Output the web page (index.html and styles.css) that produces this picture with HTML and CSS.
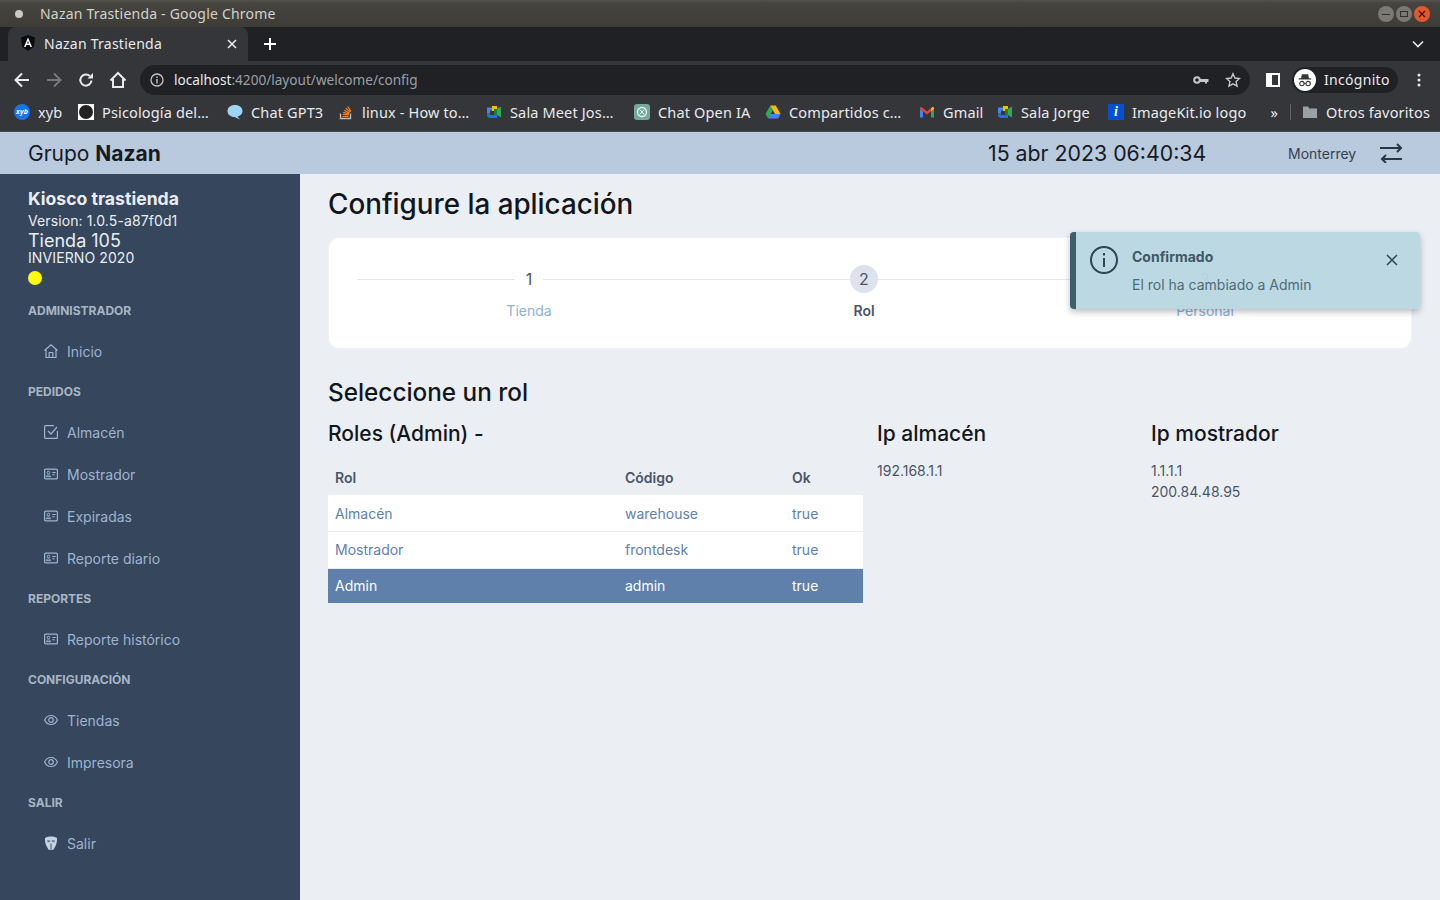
FILE: index.html
```html
<!DOCTYPE html>
<html lang="en">
<head>
  <meta charset="UTF-8" />
  <title>Nazan Trastienda</title>
  <link rel="stylesheet" href="styles.css">
</head>
<body>
  <svg class="defs" width="0" height="0">
    <symbol id="i-card" viewBox="0 0 14 14">
      <rect x="0.6" y="2.1" width="12.8" height="9.800" rx="1" fill="none" stroke="currentColor" stroke-width="1.200"/>
      <circle cx="4.400" cy="5.500" r="1.300" fill="none" stroke="currentColor"/>
      <path d="M2.200 9.700c.3-1.300 1.200-1.800 2.200-1.800s1.900.5 2.200 1.800z" fill="none" stroke="currentColor"/>
      <path d="M8.300 5.500h3.400M8.300 7.800h2.400" stroke="currentColor"/>
    </symbol>
    <symbol id="i-eye" viewBox="0 0 14 14">
      <path d="M.6 7C2 3.900 4.300 2.500 7 2.500S12 3.900 13.400 7C12 10.100 9.700 11.500 7 11.500S2 10.100 .6 7z" fill="none" stroke="currentColor" stroke-width="1.200"/>
      <circle cx="7" cy="7" r="2.300" fill="none" stroke="currentColor" stroke-width="1.200"/>
    </symbol>
  </svg>

  <div class="titlebar">
    <span class="app-dot"></span>
    <span class="window-title">Nazan Trastienda - Google Chrome</span>
    <div class="window-btns">
      <span class="wbtn"><svg width="8" height="8" viewBox="0 0 8 8"><path d="M0 4.500h8" stroke="#2f2f2b"/></svg></span>
      <span class="wbtn"><svg width="8" height="8" viewBox="0 0 8 8"><rect x=".5" y="1.500" width="7" height="5" fill="none" stroke="#2f2f2b"/></svg></span>
      <span class="wbtn close"><svg width="8" height="8" viewBox="0 0 8 8"><path d="M1 1l6 6M7 1l-6 6" stroke="#3a1508" stroke-width="1.200"/></svg></span>
    </div>
  </div>

  <div class="tabstrip">
    <div class="tab">
      <svg class="tab-icon" width="16" height="16" viewBox="0 0 16 16"><path d="M8 0l7 2.500-1.100 9.300L8 16l-5.900-4.200L1 2.500z" fill="#0b0b0d"/><path d="M8 2.500L4 12h1.600l.8-2h3.200l.8 2H12zM7 8.600l1-2.500 1 2.500z" fill="#fff"/></svg>
      <span class="tab-title">Nazan Trastienda</span>
      <svg class="tab-close" width="10" height="10" viewBox="0 0 10 10"><path d="M1 1l8 8M9 1l-8 8" stroke="#e8eaed" stroke-width="1.600"/></svg>
    </div>
    <svg class="new-tab" width="12" height="12" viewBox="0 0 12 12"><path d="M6 0v12M0 6h12" stroke="#fff" stroke-width="2"/></svg>
    <svg class="tab-list" width="12" height="8" viewBox="0 0 12 8"><path d="M1 1.500l5 5 5-5" fill="none" stroke="#e8eaed" stroke-width="1.600"/></svg>
  </div>

  <div class="toolbar">
    <div class="nav-btns">
      <svg width="16" height="16" viewBox="0 0 16 16"><path d="M15 8H2M8 1.500L1.500 8 8 14.500" fill="none" stroke="#e8eaed" stroke-width="2"/></svg>
      <svg width="16" height="16" viewBox="0 0 16 16"><path d="M1 8h13M8 1.500L14.500 8 8 14.500" fill="none" stroke="#77787b" stroke-width="2"/></svg>
      <svg width="16" height="16" viewBox="0 0 16 16"><path d="M13.500 8.500A5.600 5.600 0 1 1 11.800 4" fill="none" stroke="#e8eaed" stroke-width="2"/><path d="M9.500 6.500H15V1z" fill="#e8eaed"/></svg>
      <svg class="home-btn" width="18" height="18" viewBox="0 0 18 18"><path d="M1.500 9.500L9 2l7.500 7.500M4 8v8h10V8" fill="none" stroke="#e8eaed" stroke-width="2"/></svg>
    </div>
    <div class="omnibox">
      <svg class="info" width="14" height="14" viewBox="0 0 14 14"><circle cx="7" cy="7" r="6" fill="none" stroke="#c4c7c5" stroke-width="1.300"/><path d="M7 6v4.500M7 3.500v1.400" stroke="#c4c7c5" stroke-width="1.400"/></svg>
      <span class="url"><span class="host">localhost</span>:4200/layout/welcome/config</span>
      <svg class="key" width="16" height="10" viewBox="0 0 16 10"><circle cx="4" cy="5" r="2.800" fill="none" stroke="#c4c7c5" stroke-width="2"/><path d="M7 4h8.500v3h-1.500v1.500h-2V7H7z" fill="#c4c7c5"/></svg>
      <svg class="star" width="16" height="16" viewBox="0 0 16 16"><path d="M8 1.800l1.900 4.200 4.600.5-3.400 3.100.9 4.500L8 11.800l-4 2.300.9-4.500L1.500 6.500l4.600-.5z" fill="none" stroke="#c4c7c5" stroke-width="1.400"/></svg>
    </div>
    <svg class="panel-btn" width="14" height="14" viewBox="0 0 14 14"><rect x="1" y="1" width="12" height="12" fill="none" stroke="#fff" stroke-width="2"/><rect x="1" y="1" width="5" height="12" fill="#fff"/></svg>
    <div class="profile">
      <span class="avatar">
        <svg width="18" height="14" viewBox="0 0 18 14"><path d="M5.500 0h7l1 4.500H16V6H2V4.500h2.500z" fill="#35363a"/><circle cx="5.500" cy="10.500" r="2.500" fill="none" stroke="#35363a" stroke-width="1.200"/><circle cx="12.500" cy="10.500" r="2.500" fill="none" stroke="#35363a" stroke-width="1.200"/><path d="M8 10.300h2" stroke="#35363a" stroke-width="1.200"/></svg>
      </span>
      <span class="profile-name">Incógnito</span>
    </div>
    <svg class="menu-btn" width="4" height="14" viewBox="0 0 4 14"><circle cx="2" cy="2" r="1.500" fill="#e8eaed"/><circle cx="2" cy="7" r="1.500" fill="#e8eaed"/><circle cx="2" cy="12" r="1.500" fill="#e8eaed"/></svg>
  </div>

  <div class="bookmarks">
    <div class="bm"><span class="ic-xyb">xyb</span><span>xyb</span></div>
    <div class="bm"><span class="ic-psi"></span><span>Psicología del…</span></div>
    <div class="bm"><svg width="16" height="16" viewBox="0 0 16 16"><path d="M8 1c4.400 0 7.500 2.600 7.500 6 0 2.700-2 4.800-5 5.500L13 15.500 7.500 13C3.500 13 .5 10.500.5 7S3.600 1 8 1z" fill="#9fd4f5"/></svg><span>Chat GPT3</span></div>
    <div class="bm"><svg width="16" height="16" viewBox="0 0 16 16"><path d="M2.500 9.500v5h10v-5" fill="none" stroke="#bcbbbb" stroke-width="1.400"/><path d="M4.500 12.500h6M4.700 10.300l6 .6M5.200 8.300l5.800 1.500M6.200 6.200l5.300 2.800M7.800 4.200l4.500 3.900M9.700 2.500l3.200 4.800" stroke="#f48024" stroke-width="1.200"/></svg><span>linux - How to…</span></div>
    <div class="bm"><svg width="16" height="16" viewBox="0 0 16 16"><path d="M1 3.500h5v3H4v3H1z" fill="#4285f4"/><path d="M6 2h5v4H8v1H6z" fill="#fbbc04"/><path d="M1 9.500h3V11h7v3H3l-2-2z" fill="#1a73e8"/><path d="M11 5l4-2.500v11L11 11z" fill="#34a853"/><path d="M8 5h3v6H8z" fill="#188038"/></svg><span>Sala Meet Jos…</span></div>
    <div class="bm"><svg width="16" height="16" viewBox="0 0 16 16"><rect width="16" height="16" rx="3" fill="#74aa9c"/><circle cx="8" cy="8" r="4.500" fill="none" stroke="#e6f0ed" stroke-width="1.300"/><path d="M5.500 5.500l5 5M10.500 5.500l-5 5" stroke="#e6f0ed"/></svg><span>Chat Open IA</span></div>
    <div class="bm"><svg width="16" height="16" viewBox="0 0 16 16"><path d="M5.300 1.500L.5 10l2.700 4.500L8 6z" fill="#34a853"/><path d="M10.700 1.500H5.300L10 10h5.500z" fill="#fbbc04"/><path d="M3.200 14.500h10L15.500 10H5.500z" fill="#4285f4"/></svg><span>Compartidos c…</span></div>
    <div class="bm"><svg width="16" height="16" viewBox="0 0 16 16"><path d="M1 5l7 5.500L15 5V3.500l-1.500-.5L8 7.500 2.500 3 1 3.500z" fill="#ea4335"/><path d="M1 13.500h3V7.500L1 5z" fill="#4285f4"/><path d="M12 13.500h3V5l-3 2.500z" fill="#34a853"/><path d="M12 7.500L15 5V3.500L13.500 3 12 4.200z" fill="#fbbc04"/></svg><span>Gmail</span></div>
    <div class="bm"><svg width="16" height="16" viewBox="0 0 16 16"><path d="M1 3.500h5v3H4v3H1z" fill="#4285f4"/><path d="M6 2h5v4H8v1H6z" fill="#fbbc04"/><path d="M1 9.500h3V11h7v3H3l-2-2z" fill="#1a73e8"/><path d="M11 5l4-2.500v11L11 11z" fill="#34a853"/><path d="M8 5h3v6H8z" fill="#188038"/></svg><span>Sala Jorge</span></div>
    <div class="bm"><span class="ic-kit">i</span><span>ImageKit.io logo</span></div>
    <div class="bm-end">
      <span class="more">»</span>
      <span class="bm-sep"></span>
      <div class="bm"><svg width="16" height="14" viewBox="0 0 16 14"><path d="M1 1.500h5l1.500 2H15v9.500H1z" fill="#9aa0a6"/></svg><span>Otros favoritos</span></div>
    </div>
  </div>

  <header class="app-header">
    <div class="brand">Grupo <b>Nazan</b></div>
    <div class="clock">15 abr 2023 06:40:34</div>
    <div class="city">Monterrey</div>
    <svg class="swap" width="22" height="20" viewBox="0 0 22 20"><path d="M0 5h21M17 1l4 4-4 4M22 16H2M6 12l-4 4 4 4" fill="none" stroke="#2c3744" stroke-width="2"/></svg>
  </header>

  <div class="layout">
    <aside class="sidebar">
      <div class="kiosk">
        <div class="kiosk-name">Kiosco trastienda</div>
        <div class="kiosk-small">Version: 1.0.5-a87f0d1</div>
        <div class="kiosk-store">Tienda 105</div>
        <div class="kiosk-small">INVIERNO 2020</div>
        <div class="status-dot"></div>
      </div>

      <div class="nav-label">ADMINISTRADOR</div>
      <a class="nav-item">
        <svg width="14" height="14" viewBox="0 0 14 14"><path d="M.5 6.500L7 .8l6.500 5.700M2 5.500v8h10v-8M5.200 13.500V8.500h3.600v5" fill="none" stroke="currentColor" stroke-width="1.200"/></svg>
        Inicio
      </a>

      <div class="nav-label">PEDIDOS</div>
      <a class="nav-item">
        <svg width="14" height="14" viewBox="0 0 14 14"><path d="M13.400 6v6.400a1 1 0 0 1-1 1H1.600a1 1 0 0 1-1-1V1.600a1 1 0 0 1 1-1H10" fill="none" stroke="currentColor" stroke-width="1.200"/><path d="M4 6l3 3 6-7" fill="none" stroke="currentColor" stroke-width="1.200"/></svg>
        Almacén
      </a>
      <a class="nav-item"><svg width="14" height="14"><use href="#i-card"/></svg>Mostrador</a>
      <a class="nav-item"><svg width="14" height="14"><use href="#i-card"/></svg>Expiradas</a>
      <a class="nav-item"><svg width="14" height="14"><use href="#i-card"/></svg>Reporte diario</a>

      <div class="nav-label">REPORTES</div>
      <a class="nav-item"><svg width="14" height="14"><use href="#i-card"/></svg>Reporte histórico</a>

      <div class="nav-label">CONFIGURACIÓN</div>
      <a class="nav-item"><svg width="14" height="14"><use href="#i-eye"/></svg>Tiendas</a>
      <a class="nav-item"><svg width="14" height="14"><use href="#i-eye"/></svg>Impresora</a>

      <div class="nav-label">SALIR</div>
      <a class="nav-item">
        <svg width="14" height="14" viewBox="0 0 14 14"><path d="M1 2C3 .8 5 .4 7 .4s4 .4 6 1.600c.1 3.500-.4 6-1.500 8L9.500 13.800h-5L2.500 10C1.400 8 .9 5.500 1 2z" fill="#c9d2dd"/><path d="M3 4.200h3.200v1.600l-2.400.8zM11 4.200H7.800v1.600l2.400.8zM6.300 7.500h1.400v5.500H6.300z" fill="#5f7d9f"/></svg>
        Salir
      </a>
    </aside>

    <main class="content">
      <h1 class="page-title">Configure la aplicación</h1>

      <section class="steps-card">
        <div class="step">
          <div class="step-head"><span class="step-line"></span><span class="step-num">1</span><span class="step-line"></span></div>
          <div class="step-label">Tienda</div>
        </div>
        <div class="step active">
          <div class="step-head"><span class="step-line"></span><span class="step-num">2</span><span class="step-line"></span></div>
          <div class="step-label">Rol</div>
        </div>
        <div class="step">
          <div class="step-head"><span class="step-line"></span><span class="step-num">3</span><span class="step-line"></span></div>
          <div class="step-label">Personal</div>
        </div>
      </section>

      <h2 class="section-title">Seleccione un rol</h2>

      <div class="role-grid">
        <div>
          <h3 class="col-title">Roles (Admin) -</h3>
          <table class="roles">
            <thead>
              <tr><th>Rol</th><th>Código</th><th>Ok</th></tr>
            </thead>
            <tbody>
              <tr><td>Almacén</td><td>warehouse</td><td>true</td></tr>
              <tr><td>Mostrador</td><td>frontdesk</td><td>true</td></tr>
              <tr class="selected"><td>Admin</td><td>admin</td><td>true</td></tr>
            </tbody>
          </table>
        </div>
        <div>
          <h3 class="col-title">Ip almacén</h3>
          <p class="ip-list">192.168.1.1</p>
        </div>
        <div>
          <h3 class="col-title">Ip mostrador</h3>
          <p class="ip-list">1.1.1.1<br>200.84.48.95</p>
        </div>
      </div>

      <div class="toast">
        <svg class="toast-icon" width="28" height="28" viewBox="0 0 28 28"><circle cx="14" cy="14" r="13" fill="none" stroke="#2f4650" stroke-width="2"/><path d="M14 12v9M14 7v2.500" stroke="#2f4650" stroke-width="2"/></svg>
        <div class="toast-body">
          <div class="toast-title">Confirmado</div>
          <div class="toast-msg">El rol ha cambiado a Admin</div>
        </div>
        <svg class="toast-close" width="12" height="12" viewBox="0 0 12 12"><path d="M1 1l10 10M11 1L1 11" stroke="#2f4650" stroke-width="1.500"/></svg>
      </div>
    </main>
  </div>
</body>
</html>
```

FILE: styles.css
```css
* {
  box-sizing: border-box;
}
html, body {
  height: 100%;
}
body {
  margin: 0;
  height: 900px;
  overflow: hidden;
  font-family: Inter, "Liberation Sans", sans-serif;
  background: #ebeff4;
  display: flex;
  flex-direction: column;
}
.defs {
  position: absolute;
}

/* browser chrome */
.titlebar {
  height: 27px;
  flex: none;
  display: flex;
  align-items: center;
  padding: 0 10px 0 14px;
  background: linear-gradient(#555450, #45443f 12%, #3d3c38);
  font-family: "Noto Sans", sans-serif;
  font-size: 14px;
  letter-spacing: 0.2px;
  color: #d3d2cb;
}
.app-dot {
  width: 8px;
  height: 8px;
  border-radius: 50%;
  background: #c9c9c4;
  margin: 1px 17px 0 1px;
}
.window-btns {
  margin-left: auto;
  display: flex;
  gap: 2px;
}
.wbtn {
  width: 16px;
  height: 16px;
  border-radius: 50%;
  background: #7a7974;
  display: flex;
  align-items: center;
  justify-content: center;
}
.wbtn.close {
  background: #e2572b;
}
.tabstrip {
  height: 34px;
  flex: none;
  display: flex;
  align-items: center;
  background: #202124;
  padding-left: 8px;
  font-family: "Noto Sans", sans-serif;
}
.tab {
  width: 240px;
  height: 34px;
  background: #35363a;
  border-radius: 8px 8px 0 0;
  display: flex;
  align-items: center;
  padding: 0 11px 2px 12px;
  font-size: 14px;
  letter-spacing: 0.25px;
  color: #e8eaed;
}
.tab-icon {
  margin-right: 8px;
}
.tab-close {
  margin-left: auto;
  margin-top: 2px;
}
.new-tab {
  margin-left: 16px;
}
.tab-list {
  margin-left: auto;
  margin-right: 16px;
}
.toolbar {
  height: 34px;
  flex: none;
  display: flex;
  align-items: center;
  background: #35363a;
  padding-top: 4px;
  font-family: "Noto Sans", sans-serif;
}
.nav-btns {
  width: 140px;
  display: flex;
  align-items: center;
  gap: 16px;
  padding-left: 14px;
}
.home-btn {
  margin-left: -1px;
}
.omnibox {
  width: 1110px;
  height: 30px;
  border-radius: 15px;
  background: #202124;
  display: flex;
  align-items: center;
  padding: 0 9px 0 10px;
  font-size: 13.6px;
  color: #9aa0a6;
}
.info {
  margin-right: 10px;
}
.url {
  margin-bottom: 2px;
}
.host {
  color: #e8eaed;
}
.key {
  margin-left: auto;
  margin-right: 16px;
}
.panel-btn {
  margin-left: 16px;
}
.profile {
  margin-left: 12px;
  height: 26px;
  width: 106px;
  border-radius: 13px;
  background: #202124;
  display: flex;
  align-items: center;
  font-size: 14px;
  letter-spacing: 0.3px;
  color: #e8eaed;
}
.avatar {
  width: 22px;
  height: 22px;
  margin-left: 2px;
  margin-right: 8px;
  border-radius: 50%;
  background: #fff;
  display: flex;
  align-items: center;
  justify-content: center;
}
.avatar svg {
  width: 16px;
  height: 13px;
}
.profile-name {
  margin-bottom: 2px;
}
.menu-btn {
  margin-left: 19px;
}
.bookmarks {
  height: 37px;
  flex: none;
  display: grid;
  grid-template-columns: 64px 149px 111px 148px 148px 131px 154px 78px 111px auto 1fr;
  align-items: center;
  padding: 0 10px 2px 14px;
  background: #35363a;
  border-bottom: 1px solid #4a4b4f;
  font-family: "Noto Sans", sans-serif;
  font-size: 14.5px;
  letter-spacing: 0.15px;
  color: #e8eaed;
}
.bm {
  display: flex;
  align-items: center;
  gap: 8px;
  white-space: nowrap;
}
.bm svg {
  flex: none;
}
.ic-xyb {
  width: 16px;
  height: 16px;
  border-radius: 50%;
  background: #1a73e8;
  color: #fff;
  font-size: 7px;
  font-style: italic;
  font-weight: 700;
  text-align: center;
  line-height: 16px;
}
.ic-psi {
  width: 16px;
  height: 16px;
  background: #fff;
  position: relative;
}
.ic-psi::after {
  content: "";
  position: absolute;
  inset: 1px;
  border-radius: 50%;
  background: #222;
}
.ic-kit {
  width: 16px;
  height: 16px;
  background: #0450d5;
  color: #fff;
  font-family: "Liberation Serif", serif;
  font-style: italic;
  font-weight: 700;
  font-size: 14px;
  line-height: 16px;
  text-align: center;
}
.bm-end {
  justify-self: end;
  display: flex;
  align-items: center;
}
.more {
  margin-right: 12px;
}
.bm-sep {
  width: 1px;
  height: 16px;
  background: #5f6368;
  margin-right: 11px;
}

/* app header */
.app-header {
  height: 42px;
  flex: none;
  display: flex;
  align-items: center;
  background: #b9c9de;
  padding-left: 28px;
  color: #161b22;
}
.brand {
  width: 960px;
  font-size: 21px;
}
.clock {
  width: 300px;
  font-size: 21.3px;
}
.city {
  width: 92px;
  font-size: 14px;
  color: #36414f;
}

.layout {
  flex: 1;
  display: flex;
  min-height: 0;
}

/* sidebar */
.sidebar {
  width: 300px;
  flex: none;
  background: #35465d;
  color: #e9edf2;
}
.kiosk {
  padding: 14px 0 6px 28px;
}
.kiosk-name {
  font-size: 17.6px;
  font-weight: 700;
  line-height: 22px;
  margin-bottom: 2px;
}
.kiosk-small {
  font-size: 14px;
  letter-spacing: 0.1px;
  line-height: 18px;
}
.kiosk-store {
  font-size: 18px;
  line-height: 18px;
  margin: 2px 0 -1px;
}
.status-dot {
  width: 14px;
  height: 14px;
  border-radius: 50%;
  background: #ff0;
  margin-top: 4px;
}
.nav-label {
  height: 39px;
  line-height: 39px;
  padding-left: 28px;
  font-size: 12px;
  font-weight: 700;
  color: #a9b5c4;
}
.nav-item {
  height: 42px;
  display: flex;
  align-items: center;
  gap: 9px;
  padding-left: 44px;
  font-size: 14px;
  color: #9fb4cf;
}

/* content */
.content {
  flex: 1;
  position: relative;
  padding: 0 28px;
}
.page-title {
  margin: 0;
  height: 63px;
  line-height: 60px;
  font-size: 27.8px;
  font-weight: 500;
  color: #11161d;
}
.steps-card {
  height: 112px;
  background: #fff;
  border-radius: 12px;
  box-shadow: inset 0 0 0 1px #eef1f5;
  padding: 28px 0 0 29px;
  display: grid;
  grid-template-columns: 344px 326px 356px;
}
.step-head {
  display: flex;
  align-items: center;
  height: 28px;
}
.step-line {
  flex: 1;
  height: 1px;
  background: #e5e7eb;
}
.step-num {
  width: 28px;
  height: 28px;
  border-radius: 50%;
  background: #fff;
  text-align: center;
  line-height: 28px;
  font-size: 16px;
  color: #4a5568;
}
.step.active .step-num {
  background: #dde2ec;
}
.step-label {
  margin-top: 7px;
  text-align: center;
  font-size: 14px;
  line-height: 21px;
  color: #8fb1d6;
}
.step.active .step-label {
  font-weight: 600;
  color: #4a5568;
}
.section-title {
  margin: 26px 0 0;
  height: 34px;
  line-height: 34px;
  font-size: 24.3px;
  font-weight: 500;
  color: #11161d;
}
.role-grid {
  display: grid;
  grid-template-columns: 549px 274px 1fr;
  margin-top: 10px;
}
.col-title {
  margin: 0;
  height: 30px;
  line-height: 30px;
  font-size: 21px;
  font-weight: 500;
  color: #11161d;
}
.roles {
  width: 535px;
  margin-top: 11px;
  border-collapse: separate;
  border-spacing: 0;
  table-layout: fixed;
  font-size: 14px;
}
.roles th:nth-child(1) {
  width: 290px;
}
.roles th:nth-child(2) {
  width: 167px;
}
.roles th {
  height: 35px;
  padding: 0 7px;
  text-align: left;
  font-weight: 600;
  color: #4a5568;
}
.roles td {
  height: 37px;
  padding: 0 7px;
  background: #fff;
  border-bottom: 1px solid #e9ecef;
  color: #5f81ad;
}
.roles tr:nth-child(n+2) td {
  padding-bottom: 2px;
}
.roles tr.selected td {
  height: 34px;
  background: #5e80aa;
  border-bottom: 0;
  color: #fff;
}
.ip-list {
  margin: 11px 0 0;
  font-size: 14px;
  line-height: 21px;
  color: #4a5568;
}

/* toast */
.toast {
  position: absolute;
  top: 58px;
  right: 20px;
  width: 350px;
  height: 77px;
  display: flex;
  background: rgba(184, 215, 226, 0.95);
  border-left: 6px solid #3e5e6b;
  border-radius: 4px;
  box-shadow: 0 3px 6px rgba(0, 0, 0, 0.25);
  color: #3f5866;
}
.toast-icon {
  margin: 14px 14px 0 14px;
  flex: none;
}
.toast-body {
  padding: 14px 0 0;
  font-size: 14px;
}
.toast-title {
  font-weight: 700;
  line-height: 21px;
}
.toast-msg {
  margin-top: 7px;
  line-height: 21px;
  color: #4f6b79;
}
.toast-close {
  margin: 22px 22px 0 auto;
  flex: none;
}
```
